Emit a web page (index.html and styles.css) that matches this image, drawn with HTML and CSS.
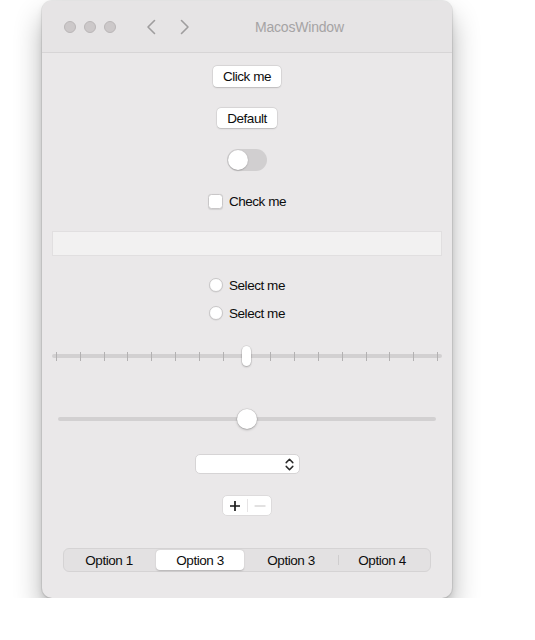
FILE: index.html
```html
<!DOCTYPE html>
<html lang="en">

<head>
    <meta charset="UTF-8">
    <meta name="viewport" content="width=device-width, initial-scale=1.0">
    <title>MacosWindow</title>
    <link rel="stylesheet" href="styles.css">
</head>

<body>
    <div class="window">
        <div class="titleBar">
            <div class="lights">
                <span class="light"></span>
                <span class="light"></span>
                <span class="light"></span>
            </div>
            <div class="nav">
                <svg class="navArrow" width="10" height="16" viewBox="0 0 10 16">
                    <path d="M8.5 1.5 L2 8 L8.5 14.5" />
                </svg>
                <svg class="navArrow" width="10" height="16" viewBox="0 0 10 16">
                    <path d="M1.5 1.5 L8 8 L1.5 14.5" />
                </svg>
            </div>
            <div class="title">MacosWindow</div>
        </div>

        <div class="content">
            <button class="btn clickBtn">Click me</button>
            <button class="btn defaultBtn">Default</button>

            <div class="toggle"><span class="toggleKnob"></span></div>

            <label class="checkRow"><span class="checkBox"></span>Check me</label>

            <input class="textField" type="text">

            <label class="radioRow firstRadio"><span class="radioDot"></span>Select me</label>
            <label class="radioRow secondRadio"><span class="radioDot"></span>Select me</label>

            <div class="slider tickSlider">
                <div class="sliderTrack"></div>
                <div class="ticks">
                    <i></i><i></i><i></i><i></i><i></i><i></i><i></i><i></i><i></i>
                    <i></i><i></i><i></i><i></i><i></i><i></i><i></i><i></i>
                </div>
                <div class="rectThumb"></div>
            </div>

            <div class="slider plainSlider">
                <div class="sliderTrack"></div>
                <div class="roundThumb"></div>
            </div>

            <div class="popup">
                <svg width="9" height="13" viewBox="0 0 9 13">
                    <path d="M1.2 4.6 L4.5 1.3 L7.8 4.6" />
                    <path d="M1.2 8.4 L4.5 11.7 L7.8 8.4" />
                </svg>
            </div>

            <div class="stepper">
                <svg class="plus" width="12" height="12" viewBox="0 0 12 12">
                    <path d="M6 1 V11 M1 6 H11" />
                </svg>
                <span class="stepSep"></span>
                <svg class="minus" width="12" height="12" viewBox="0 0 12 12">
                    <path d="M0.5 6 H11.5" />
                </svg>
            </div>

            <div class="segmented">
                <div class="segment">Option 1</div>
                <div class="segment selected">Option 3</div>
                <div class="segment">Option 3</div>
                <div class="segment divided">Option 4</div>
            </div>
        </div>
    </div>
</body>

</html>
```

FILE: styles.css
```css
body {
    margin: 0;
    background: #ffffff;
    font-family: "Liberation Sans", Arial, Helvetica, sans-serif;
    font-size: 13.5px;
    letter-spacing: -0.45px;
    color: #0d0d0d;
}

.window {
    width: 410px;
    height: 597px;
    margin: 1px 0 0 42px;
    background: #eae8e9;
    border-radius: 10px;
    overflow: hidden;
    box-shadow: 0 0 0 1px rgba(0, 0, 0, 0.07),
        0 16px 28px rgba(0, 0, 0, 0.3),
        0 3px 6px rgba(0, 0, 0, 0.1);
}

/* title bar */

.titleBar {
    height: 51px;
    border-bottom: 1px solid #d7d5d6;
    background: #e6e4e5;
    display: flex;
    align-items: center;
    padding-left: 22px;
}

.lights {
    display: flex;
    gap: 8px;
}

.light {
    width: 12px;
    height: 12px;
    box-sizing: border-box;
    border-radius: 50%;
    background: #ccc8c9;
    border: 1px solid #bab6b7;
}

.nav {
    display: flex;
    gap: 24px;
    margin-left: 30px;
}

.navArrow path {
    fill: none;
    stroke: #9f9d9e;
    stroke-width: 1.6;
    stroke-linecap: round;
    stroke-linejoin: round;
}

.title {
    margin-left: 65px;
    font-size: 14px;
    letter-spacing: -0.2px;
    color: #a5a3a4;
}

/* content column */

.content {
    display: flex;
    flex-direction: column;
    align-items: center;
    padding: 0 10px;
}

.btn {
    -webkit-appearance: none;
    appearance: none;
    border: none;
    background: #ffffff;
    border-radius: 4px;
    font: inherit;
    letter-spacing: inherit;
    color: #0d0d0d;
    padding: 0 8px;
    box-shadow: 0 0 0 0.5px rgba(0, 0, 0, 0.1), 0 0.5px 1.5px rgba(0, 0, 0, 0.15);
}

.clickBtn {
    margin-top: 13px;
    height: 21px;
    width: 68px;
}

.defaultBtn {
    margin-top: 21px;
    height: 20px;
    width: 60px;
}

.toggle {
    margin-top: 21px;
    width: 40px;
    height: 22px;
    border-radius: 11px;
    background: #d1cfd0;
    display: flex;
    align-items: center;
    padding: 0 1px;
    box-sizing: border-box;
}

.toggleKnob {
    width: 20px;
    height: 20px;
    border-radius: 50%;
    background: #ffffff;
    box-shadow: 0 0.5px 1.5px rgba(0, 0, 0, 0.3);
}

.checkRow {
    margin-top: 22px;
    height: 16px;
    display: flex;
    align-items: center;
}

.checkBox {
    width: 15px;
    height: 15px;
    box-sizing: border-box;
    margin-right: 6px;
    border-radius: 3.5px;
    background: #ffffff;
    border: 0.5px solid #c9c7c8;
    box-shadow: 0 0.5px 1px rgba(0, 0, 0, 0.1);
}

.textField {
    margin-top: 22px;
    width: 100%;
    height: 25px;
    box-sizing: border-box;
    border: 1px solid #e1dfe0;
    background: #f2f1f1;
    outline: none;
}

.radioRow {
    height: 16px;
    display: flex;
    align-items: center;
}

.firstRadio {
    margin-top: 21px;
}

.secondRadio {
    margin-top: 12px;
}

.radioDot {
    width: 14px;
    height: 14px;
    box-sizing: border-box;
    margin-right: 6px;
    border-radius: 50%;
    background: #ffffff;
    border: 0.5px solid #c9c7c8;
    box-shadow: 0 0.5px 1px rgba(0, 0, 0, 0.1);
}

/* sliders */

.slider {
    position: relative;
    height: 20px;
    display: flex;
    align-items: center;
}

.sliderTrack {
    width: 100%;
    height: 4px;
    border-radius: 2px;
    background: #d2d0d1;
}

.tickSlider {
    margin-top: 25px;
    width: 100%;
}

.ticks {
    position: absolute;
    left: 4px;
    right: 4px;
    top: 6px;
    height: 9px;
    display: flex;
    justify-content: space-between;
}

.ticks i {
    width: 1px;
    height: 9px;
    background: #b3b1b2;
}

.rectThumb {
    position: absolute;
    left: 190px;
    top: 0;
    width: 9px;
    height: 20px;
    border-radius: 4.5px;
    background: #ffffff;
    box-shadow: 0 0 0 0.5px rgba(0, 0, 0, 0.12), 0 1px 2px rgba(0, 0, 0, 0.25);
}

.plainSlider {
    margin-top: 43px;
    width: 378px;
}

.roundThumb {
    position: absolute;
    left: 179px;
    top: 0;
    width: 20px;
    height: 20px;
    border-radius: 50%;
    background: #ffffff;
    box-shadow: 0 0 0 0.5px rgba(0, 0, 0, 0.12), 0 1px 2.5px rgba(0, 0, 0, 0.25);
}

/* popup and stepper */

.popup {
    margin-top: 25px;
    width: 105px;
    height: 20px;
    box-sizing: border-box;
    border-radius: 5px;
    background: #ffffff;
    border: 1px solid #d6d4d5;
    display: flex;
    align-items: center;
    justify-content: flex-end;
    padding-right: 5px;
}

.popup path {
    fill: none;
    stroke: #2a2a2a;
    stroke-width: 1.5;
    stroke-linecap: round;
    stroke-linejoin: round;
}

.stepper {
    margin-top: 21px;
    width: 50px;
    height: 21px;
    box-sizing: border-box;
    border-radius: 5px;
    background: #ffffff;
    border: 1px solid #dddbdc;
    display: flex;
    align-items: center;
    justify-content: center;
    gap: 6px;
}

.plus path {
    stroke: #1a1a1a;
    stroke-width: 1.7;
}

.minus path {
    stroke: #cfcdce;
    stroke-width: 1.2;
}

.stepSep {
    width: 1px;
    height: 13px;
    background: #e6e4e5;
}

/* segmented control */

.segmented {
    margin-top: 32px;
    width: 368px;
    height: 24px;
    box-sizing: border-box;
    border: 1px solid #d5d3d4;
    border-radius: 6px;
    background: #e3e1e2;
    padding: 1px;
    display: grid;
    grid-template-columns: repeat(4, 1fr);
}

.segment {
    position: relative;
    display: flex;
    align-items: center;
    justify-content: center;
    padding-right: 3px;
}

.segment.selected {
    background: #ffffff;
    border-radius: 4px;
    margin-right: 3px;
    padding-right: 0;
    box-shadow: 0 0.5px 1.5px rgba(0, 0, 0, 0.2);
}

.segment.divided::before {
    content: "";
    position: absolute;
    left: 0;
    top: 5px;
    bottom: 5px;
    width: 1px;
    background: #cfcdce;
}
```
